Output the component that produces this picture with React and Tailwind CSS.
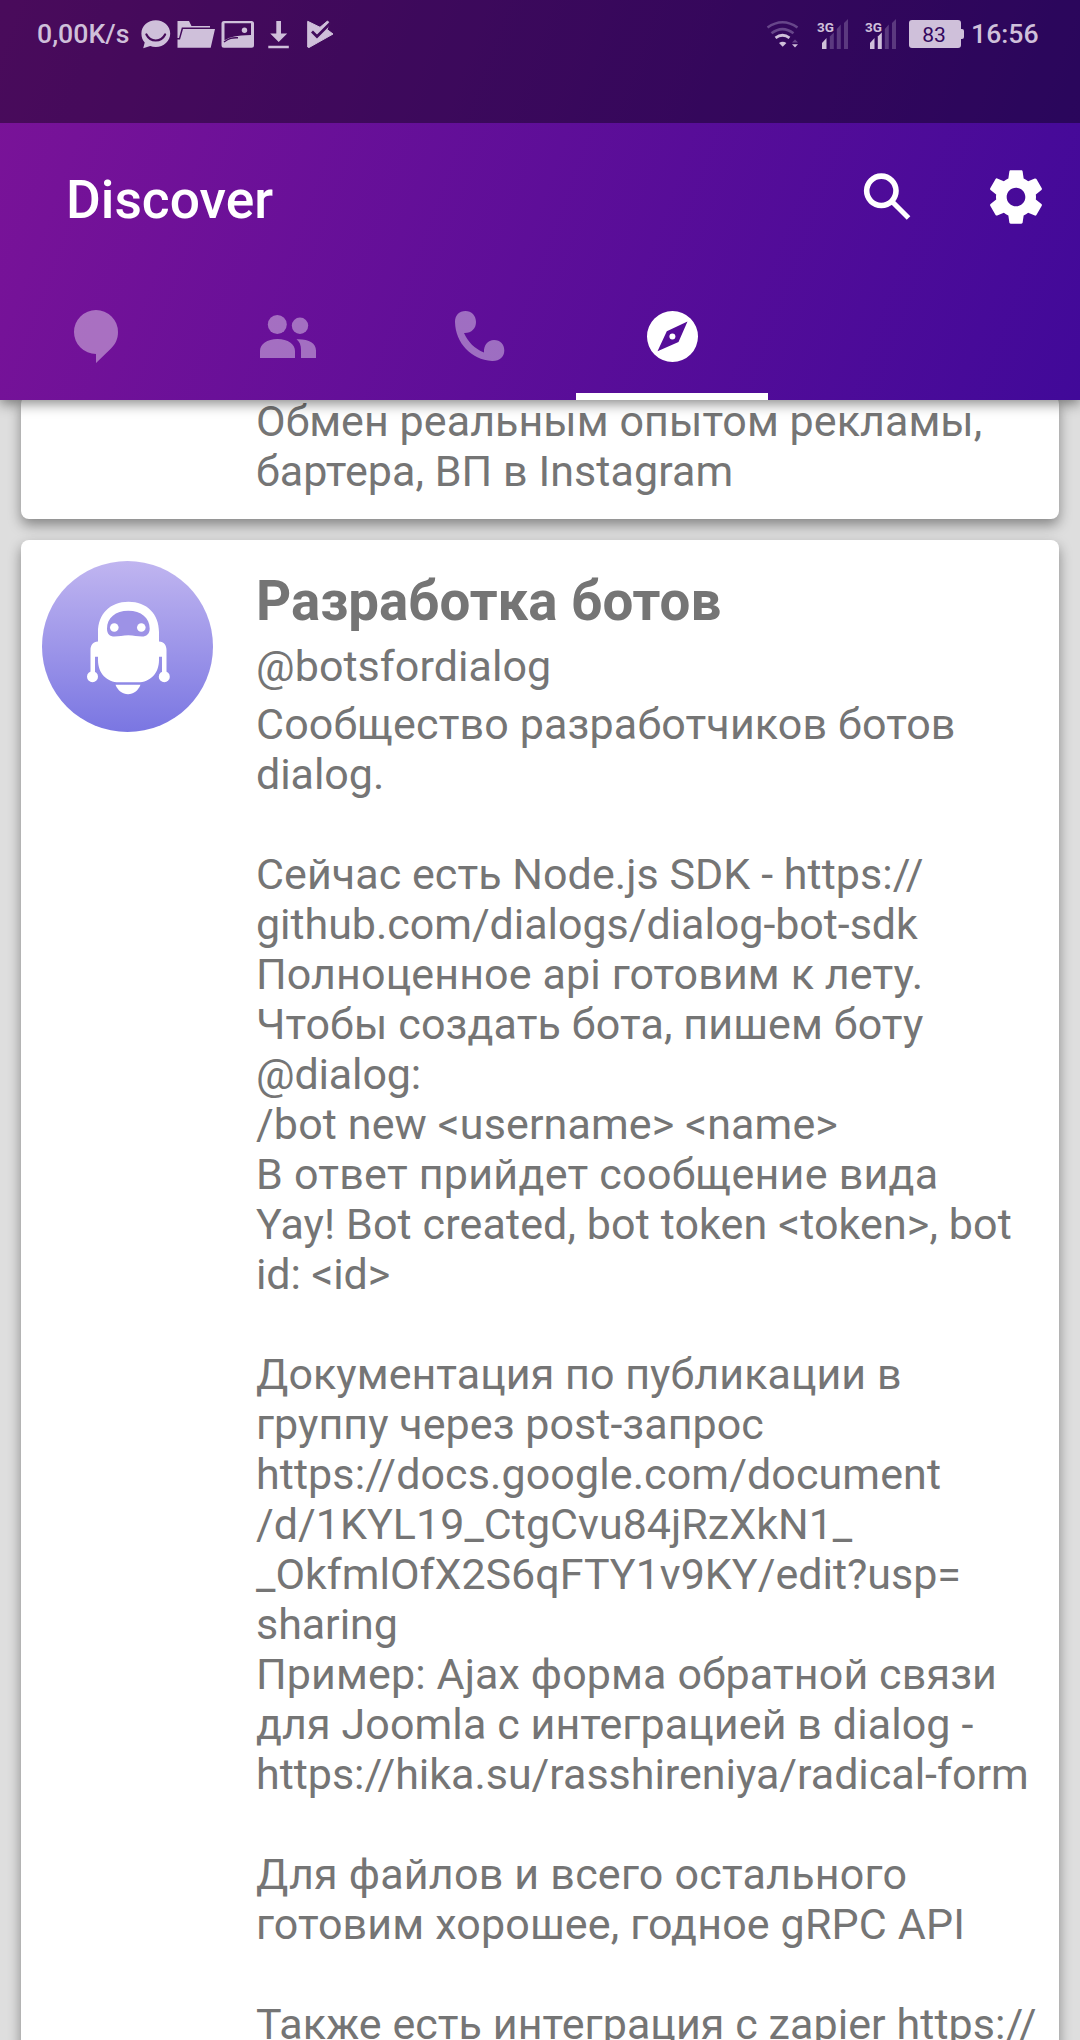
import React from "react";

const FG = "#cfc0da";

function ChatSmile() {
  return (
    <svg className="ml-[12px] h-[30px] w-[32px]" viewBox="140 19 32 30">
      <path fill={FG} d="M155.800 20.200c-8 0-14.400 5.600-14.400 13.400 0 4 1.300 6.800 3.300 9l-1.500 5.700 7-2.200c1.700.6 3.600.9 5.600.9 8 0 14.400-5.700 14.400-13.400s-6.400-13.400-14.400-13.400z" />
      <path fill="none" stroke="#460c5a" strokeWidth="2.200" strokeLinecap="round" d="M146.400 34.500c2 4 5.300 6 9.300 6s7.400-2 9.400-6" />
    </svg>
  );
}

function Folder() {
  return (
    <svg className="ml-[4px] h-[30px] w-[40px]" viewBox="176 19 40 30">
      <path fill={FG} d="M177.500 21h11.500l2.500 5h18.500v1.600h-28.200l-2.800 10.400h-1.500z" />
      <path fill={FG} d="M183 29h32l-4.300 18.800h-33.200V39.500h2.500z" />
    </svg>
  );
}

function Picture() {
  return (
    <svg className="ml-[4px] h-[30px] w-[36px]" viewBox="220 19 36 30">
      <path fill={FG} fillRule="evenodd" d="M224 21h27.500a2.500 2.500 0 0 1 2.500 2.500v21.800a2.500 2.500 0 0 1-2.500 2.500H224a2.500 2.500 0 0 1-2.500-2.500V23.500A2.500 2.500 0 0 1 224 21zm.5 2.300v17c5.500-3.300 12-5 26.500-5.300V23.300z" />
      <path fill="none" stroke="#430c5b" strokeWidth="1.500" d="M224 42c5-3.800 8-4.500 14-4.200" />
      <circle cx="244.500" cy="30.300" r="2.700" fill={FG} />
    </svg>
  );
}

function Download() {
  return (
    <svg className="ml-[11px] h-[30px] w-[24px]" viewBox="267 19 24 30">
      <path fill={FG} d="M276.300 21h4.700v12.500h6.200L278.700 42l-8.500-8.500h6.100zM268.300 45.700h20.500v2.600h-20.500z" />
    </svg>
  );
}

function PlayCheck() {
  return (
    <svg className="ml-[14px] h-[30px] w-[32px]" viewBox="305 19 32 30">
      <path fill={FG} stroke={FG} strokeWidth="1" strokeLinejoin="round" d="M307.700 21.300l12.300 6 7.500-6.300 2 2-2.500 6.500 6 4.500-24 13.500-1.300-.5z" />
      <path fill="none" stroke="#410c5c" strokeWidth="2.800" d="M312 31.500l5 5L331 22.500" />
    </svg>
  );
}

function Wifi() {
  return (
    <svg className="h-[30px] w-[34px]" viewBox="766 19 34 30" fill="none">
      <g stroke="#67468a" strokeWidth="2.600">
        <path d="M767.500 27.500q15-10.500 30 0" />
        <path d="M771.500 33.300q11-8.500 22 0" />
      </g>
      <path stroke={FG} strokeWidth="2.800" d="M775.500 37.800q7-5 14 0" />
      <path fill={FG} d="M779 43q3.700-2.500 7.400 0l-3.700 3.800z" />
      <path fill="#67468a" d="M792 42.600l3-3 3 3z" />
      <path fill={FG} d="M792 44.200h6l-3 3.200z" />
    </svg>
  );
}

function Signal({ bars }) {
  const dim = "#5b397f";
  return (
    <div className="relative h-[30px] w-[34px]">
      <svg className="h-[30px] w-[34px]" viewBox="816 19 34 30">
        <path fill={FG} d="M822 43l4.500-5v11H822z" />
        <path fill={bars > 1 ? FG : dim} d="M829.800 36.500l4-4V49h-4z" />
        <path fill={dim} d="M836.800 29l4-4.500V49h-4zM844 23l4-4v30h-4z" />
      </svg>
      <span className="absolute left-[1px] top-[2px] text-[13.5px] font-bold leading-[13px] text-[#cfc0da]">3G</span>
    </div>
  );
}

function Robot() {
  return (
    <svg className="h-[171px] w-[171px]" viewBox="42 561 171 171">
      <g fill="#fff">
        <path d="M98 632c0-18 12-30.300 30.500-30.300S159 614 159 632v9.500c5 .5 7.500 3.500 7.500 8.500v22H162v-15.300h-3V660c0 13.500-9 22.300-21 22.300h-19c-12 0-21-8.800-21-22.300v-3.300h-3V672h-4.500v-22c0-5 2.500-8 7.500-8.500z" />
        <circle cx="92.500" cy="676.700" r="5.500" />
        <circle cx="164.300" cy="676.700" r="5.500" />
        <path d="M115.500 684.700h25c-2.500 6-7 9.500-12.500 9.500s-10-3.500-12.500-9.500z" />
      </g>
      <path fill="#9d92e6" d="M107 628.500c0-10.500 8.500-17.800 21.300-17.800s21.400 7.300 21.400 17.800c0 5.500-3.300 8-7.700 8-4.500 0-8-1.300-13.700-1.300s-9.200 1.300-13.700 1.300c-5 0-7.600-2.500-7.600-8z" />
      <circle cx="114.300" cy="627.500" r="4.300" fill="#fff" />
      <circle cx="141.300" cy="627.500" r="4.300" fill="#fff" />
    </svg>
  );
}

const teaser = [
  ["Обмен реальным опытом рекламы,", 0.07],
  ["бартера, ВП в Instagram", 0.07],
];

// Each line carries its own tracking in pixels.
const description = [
  ["Сообщество разработчиков ботов", 0.15],
  ["dialog.", -0.05],
  ["", 0],
  ["Сейчас есть Node.js SDK - https://", 0.06],
  ["github.com/dialogs/dialog-bot-sdk", -0.04],
  ["Полноценное api готовим к лету.", 0.13],
  ["Чтобы создать бота, пишем боту", 0.12],
  ["@dialog:", -0.15],
  ["/bot new <username> <name>", 0.13],
  ["В ответ прийдет сообщение вида", 0.26],
  ["Yay! Bot created, bot token <token>, bot", 0.12],
  ["id: <id>", -0.1],
  ["", 0],
  ["Документация по публикации в", 0.06],
  ["группу через post-запрос", 0.05],
  ["https://docs.google.com/document", 0.1],
  ["/d/1KYL19_CtgCvu84jRzXkN1_", 0.02],
  ["_OkfmlOfX2S6qFTY1v9KY/edit?usp=", 0],
  ["sharing", -0.05],
  ["Пример: Ajax форма обратной связи", 0.12],
  ["для Joomla с интеграцией в dialog -", 0.1],
  ["https://hika.su/rasshireniya/radical-form", -0.02],
  ["", 0],
  ["Для файлов и всего остального", 0.23],
  ["готовим хорошее, годное gRPC API", 0.15],
  ["", 0],
  ["Также есть интеграция с zapier https://", 0.08],
];

function Lines({ lines }) {
  return lines.map(([line, tracking], i) => (
    <p key={i} className="h-[50px] whitespace-nowrap text-[43px] leading-[50px]" style={{ letterSpacing: `${tracking}px` }}>
      {line}
    </p>
  ));
}

function StatusBar() {
  return (
    <div className="h-[123px] bg-black/40 pt-[1px] text-[#cfc0da]">
      <div className="flex h-[66px] items-center pl-[37px] pr-[41px]">
        <span className="w-[91px] whitespace-nowrap text-[26.67px] font-medium">0,00K/s</span>
        <ChatSmile />
        <Folder />
        <Picture />
        <Download />
        <PlayCheck />
        <div className="ml-auto flex items-center">
          <Wifi />
          <div className="ml-[16px]"><Signal bars={1} /></div>
          <div className="ml-[14px]"><Signal bars={2} /></div>
          <div className="ml-[11px] flex items-center">
            <div className="flex h-[28px] w-[52px] items-center justify-center rounded-[3px] bg-[#cfc0da]">
              <span className="pr-[2px] pt-[3px] text-[21px] leading-none text-[#33075e]">83</span>
            </div>
            <div className="h-[10px] w-[3px] rounded-r-[2px] bg-[#cfc0da]" />
          </div>
          <span className="ml-[7px] w-[68px] whitespace-nowrap text-[26.67px] font-medium">16:56</span>
        </div>
      </div>
    </div>
  );
}

function Header() {
  return (
    <header className="relative z-10 flex h-[400px] flex-col bg-[linear-gradient(110.3deg,#7b1398,#410999)] shadow-[0_4px_12px_rgba(0,0,0,0.45)]">
      <StatusBar />
      <div className="flex h-[149px] items-center pl-[66px] pr-[32px]">
        <h1 className="pt-[4px] text-[53.33px] font-medium leading-[62px] text-white">Discover</h1>
        <svg className="ml-auto h-[64px] w-[64px]" viewBox="0 0 24 24" fill="none" stroke="#fff">
          <circle cx="9.500" cy="9.300" r="5.500" strokeWidth="2.100" />
          <path strokeWidth="1.900" d="M13.500 13.300l6.200 6.200" />
        </svg>
        <svg className="mb-[1px] ml-[64px] h-[64px] w-[64px]" viewBox="0 0 24 24">
          <path fill="#fff" d="M19.430 12.980c.04-.32.07-.64.07-.98s-.03-.66-.07-.98l2.110-1.650c.19-.15.24-.42.12-.64l-2-3.460c-.12-.22-.39-.3-.61-.22l-2.490 1c-.52-.4-1.080-.73-1.690-.98l-.38-2.650C14.460 2.180 14.250 2 14 2h-4c-.25 0-.46.18-.49.42l-.38 2.650c-.61.25-1.170.59-1.690.98l-2.490-1c-.23-.09-.49 0-.61.22l-2 3.460c-.13.22-.07.49.12.64l2.110 1.650c-.04.32-.07.65-.07.98s.03.66.07.98l-2.110 1.650c-.19.15-.24.42-.12.64l2 3.460c.12.22.39.3.61.22l2.490-1c.52.4 1.080.73 1.690.98l.38 2.650c.03.24.24.42.49.42h4c.25 0 .46-.18.49-.42l.38-2.650c.61-.25 1.170-.59 1.690-.98l2.490 1c.23.09.49 0 .61-.22l2-3.460c.12-.22.07-.49-.12-.64l-2.110-1.650zM12 15.500c-1.930 0-3.500-1.570-3.500-3.500s1.570-3.500 3.500-3.500 3.500 1.570 3.500 3.500-1.570 3.500-3.500 3.500z" />
        </svg>
      </div>
      <nav className="flex h-[128px]">
        <div className="flex h-full w-[192px] items-center justify-center">
          <svg className="h-[64px] w-[64px]" viewBox="64 304 64 64">
            <path fill="#fff" fillOpacity=".4" d="M96 310a22 22 0 0 0 0 44v9l15-14.500c4.500-4.500 7-9.500 7-16.500a22 22 0 0 0-22-22z" />
          </svg>
        </div>
        <div className="flex h-full w-[192px] items-center justify-center">
          <svg className="h-[64px] w-[64px]" viewBox="256 304 64 64">
            <g fill="#fff" fillOpacity=".4">
              <circle cx="277.300" cy="324.500" r="9.500" />
              <circle cx="300" cy="325.700" r="8.200" />
              <path d="M260 358v-7c0-7 7-12 17.500-12s17.500 5 17.500 12v7zM296.500 339.300c12-.5 19.500 3.500 19.500 11.200v7.500h-15v-8c0-5-1.500-8.500-4.500-10.700z" />
            </g>
          </svg>
        </div>
        <div className="flex h-full w-[192px] items-center justify-center">
          <svg className="h-[64px] w-[64px]" viewBox="448 304 64 64">
            <path fill="#fff" fillOpacity=".4" d="M465.500 311c6 0 10.500 4.500 10.500 11 0 6.500-4.500 11.300-12 11 4 9 10.500 15.500 20 19.500-.5-7.500 4-12.500 10-12.500 6.500 0 10.300 4.500 10.300 10.500 0 6.500-4.800 10.800-12.300 10.500-21-1.500-36.500-18-37-39-.1-6.500 4-11 10.500-11z" />
          </svg>
        </div>
        <div className="flex h-full w-[192px] flex-col">
          <div className="flex h-[121px] items-center justify-center pt-[7px]">
            <svg className="h-[64px] w-[64px]" viewBox="640 304 64 64">
              <path fill="#fff" fillRule="evenodd" d="M672.500 311a25.500 25.500 0 1 1 0 51 25.500 25.500 0 0 1 0-51zM687.500 321.500l-20.700 9.800-9.300 20 21-9.300z" />
              <circle cx="672.400" cy="336.500" r="3" fill="#fff" />
            </svg>
          </div>
          <div className="h-[7px] bg-white" />
        </div>
      </nav>
    </header>
  );
}

export default function App() {
  const card = "mx-[21px] rounded-[8px] bg-white shadow-[0_6px_13px_rgba(0,0,0,0.4)]";
  return (
    <div className="h-[2040px] w-[1080px] overflow-hidden bg-[#dedede] text-[#757575]" style={{ fontFamily: 'Roboto, "Noto Sans", sans-serif' }}>
      <Header />
      <main className="-mt-[4px] flex flex-col gap-[21px]">
        <article className={`${card} h-[123px] pl-[235px]`}>
          <Lines lines={teaser} />
        </article>
        <article className={`${card} flex h-[1560px] gap-[43px] pl-[21px] pt-[21px]`}>
          <div className="h-[171px] w-[171px] shrink-0 overflow-hidden rounded-full bg-[linear-gradient(180deg,#c0b5f0,#7a76e2)]">
            <Robot />
          </div>
          <div className="pt-[7px]">
            <h2 className="h-[68px] whitespace-nowrap text-[54.7px] font-bold leading-[66px]">Разработка ботов</h2>
            <p className="h-[63px] text-[43px] leading-[61px] tracking-[0.06px]">@botsfordialog</p>
            <Lines lines={description} />
          </div>
        </article>
      </main>
    </div>
  );
}
